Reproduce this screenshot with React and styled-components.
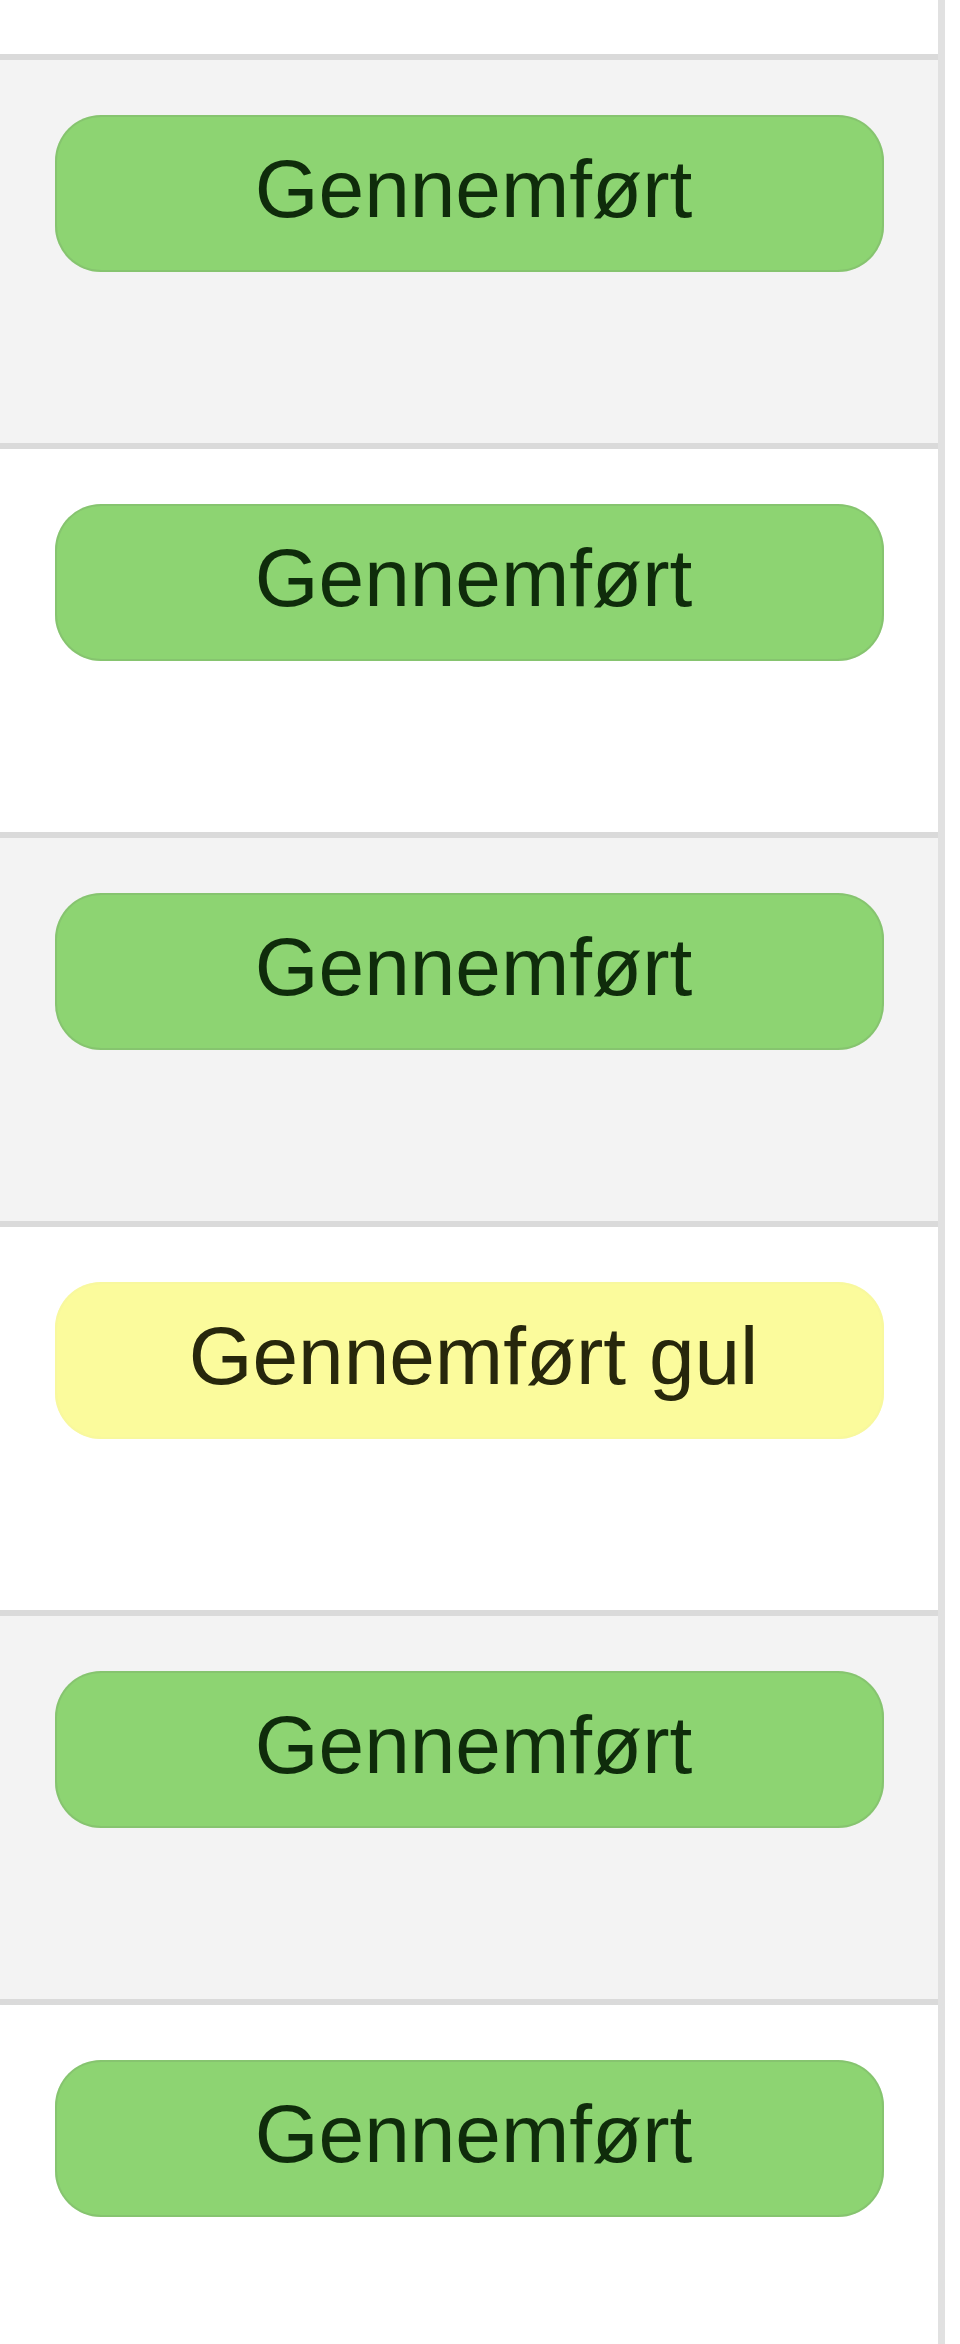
import React from 'react'
import styled, {createGlobalStyle} from 'styled-components'

const rows = [
      {id: 1, label: 'Gennemført', tone: 'green'},
      {id: 2, label: 'Gennemført', tone: 'green'},
      {id: 3, label: 'Gennemført', tone: 'green'},
      {id: 4, label: 'Gennemført gul', tone: 'yellow'},
      {id: 5, label: 'Gennemført', tone: 'green'},
      {id: 6, label: 'Gennemført', tone: 'green'},
]

const tones = {
      green: {bg: '#8dd472', rim: 'rgba(120, 160, 105, 0.3)', text: '#0f2c0b'},
      yellow: {bg: '#fbfb9c', rim: 'rgba(245, 245, 160, 0.5)', text: '#27270c'},
}

const App = () => {
      return (
            <>
                  <GlobalStyle />
                  <Page>
                        <StatusTable>
                              <HeaderRow />
                              {rows.map((row, i) => {
                                    return <StatusRow key={row.id} $striped={i % 2 === 0}>
                                                <StatusPill $tone={row.tone}>{row.label}</StatusPill>
                                          </StatusRow>
                              })}
                        </StatusTable>
                        <Gutter />
                  </Page>
            </>
      )
}

const GlobalStyle = createGlobalStyle`
      html, body {
            margin: 0;
            padding: 0;
            overflow: hidden;
            background: #ffffff;
      }
      body {
            font-family: "Liberation Sans", Arial, sans-serif;
      }
`

const Page = styled.div`
      display: flex;
      width: 960px;
      height: 2344px;
      overflow: hidden;
`

const StatusTable = styled.div`
      display: flex;
      flex-direction: column;
      width: 938px;
      border-right: 7px solid #e1e1e1;
      background: #ffffff;
`

const HeaderRow = styled.div`
      height: 54px;
      flex-shrink: 0;
      background: #ffffff;
`

// row = 6px rule + 383px body, pill sits 55px down
const StatusRow = styled.div`
      flex-shrink: 0;
      box-sizing: border-box;
      height: 389px;
      border-top: 6px solid #dadada;
      background: ${p => p.$striped ? '#f3f3f3' : '#ffffff'};
      padding: 55px 54px 0 55px;
`

const StatusPill = styled.div`
      display: flex;
      align-items: center;
      justify-content: center;
      box-sizing: border-box;
      height: 157px;
      padding: 0 0 10px 8px;
      border-radius: 46px;
      background: ${p => tones[p.$tone].bg};
      box-shadow: inset 0 0 0 2px ${p => tones[p.$tone].rim};
      color: ${p => tones[p.$tone].text};
      font-size: 82px;
      line-height: 1;
      white-space: nowrap;
`

const Gutter = styled.div`
      flex: 1;
      background: #ffffff;
`

export default App
